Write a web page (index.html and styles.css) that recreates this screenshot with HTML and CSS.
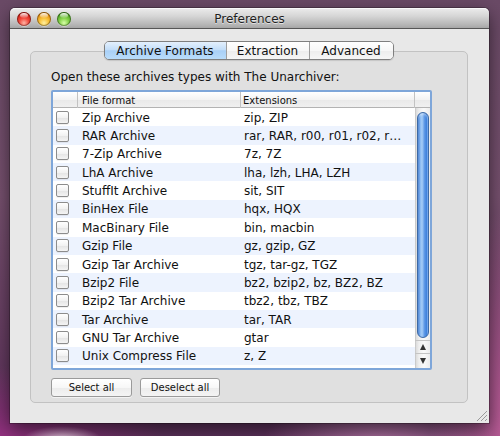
FILE: index.html
```html
<!DOCTYPE html>
<html>
<head>
<meta charset="utf-8">
<title>Preferences</title>
<link rel="stylesheet" href="styles.css">
</head>
<body>
<div class="window">
  <div class="titlebar">
    <div class="lights">
      <span class="light red"></span>
      <span class="light orange"></span>
      <span class="light green"></span>
    </div>
    <div class="title">Preferences</div>
    <div></div>
  </div>
  <div class="content">
    <div class="tabs">
      <div class="seg seg-a selected">Archive Formats</div>
      <div class="seg seg-b">Extraction</div>
      <div class="seg seg-c">Advanced</div>
    </div>
    <div class="box">
      <div class="label">Open these archives types with The Unarchiver:</div>
      <div class="table">
        <div class="thead">
          <div class="th"></div>
          <div class="th th-file">File format</div>
          <div class="th th-ext">Extensions</div>
          <div class="th th-corner"></div>
        </div>
        <div class="tbody">
          <div class="rows">
            <div class="row"><span class="cb"></span><span class="c-file">Zip Archive</span><span class="c-ext">zip, ZIP</span></div>
            <div class="row"><span class="cb"></span><span class="c-file">RAR Archive</span><span class="c-ext">rar, RAR, r00, r01, r02, r…</span></div>
            <div class="row"><span class="cb"></span><span class="c-file">7-Zip Archive</span><span class="c-ext">7z, 7Z</span></div>
            <div class="row"><span class="cb"></span><span class="c-file">LhA Archive</span><span class="c-ext">lha, lzh, LHA, LZH</span></div>
            <div class="row"><span class="cb"></span><span class="c-file">StuffIt Archive</span><span class="c-ext">sit, SIT</span></div>
            <div class="row"><span class="cb"></span><span class="c-file">BinHex File</span><span class="c-ext">hqx, HQX</span></div>
            <div class="row"><span class="cb"></span><span class="c-file">MacBinary File</span><span class="c-ext">bin, macbin</span></div>
            <div class="row"><span class="cb"></span><span class="c-file">Gzip File</span><span class="c-ext">gz, gzip, GZ</span></div>
            <div class="row"><span class="cb"></span><span class="c-file">Gzip Tar Archive</span><span class="c-ext">tgz, tar-gz, TGZ</span></div>
            <div class="row"><span class="cb"></span><span class="c-file">Bzip2 File</span><span class="c-ext">bz2, bzip2, bz, BZ2, BZ</span></div>
            <div class="row"><span class="cb"></span><span class="c-file">Bzip2 Tar Archive</span><span class="c-ext">tbz2, tbz, TBZ</span></div>
            <div class="row"><span class="cb"></span><span class="c-file">Tar Archive</span><span class="c-ext">tar, TAR</span></div>
            <div class="row"><span class="cb"></span><span class="c-file">GNU Tar Archive</span><span class="c-ext">gtar</span></div>
            <div class="row"><span class="cb"></span><span class="c-file">Unix Compress File</span><span class="c-ext">z, Z</span></div>
            <div class="row"><span class="cb"></span><span class="c-file"></span><span class="c-ext"></span></div>
          </div>
          <div class="scroller">
            <div class="track"><div class="knob"></div></div>
            <div class="arrow up"><span class="tri tri-up"></span></div>
            <div class="arrow down"><span class="tri tri-down"></span></div>
          </div>
        </div>
      </div>
      <div class="buttons">
        <button class="btn btn-select">Select all</button>
        <button class="btn btn-deselect">Deselect all</button>
      </div>
    </div>
  </div>
  <svg class="grip" width="11" height="11" viewBox="0 0 11 11">
    <line x1="1" y1="11" x2="11" y2="1" stroke="#9a9a9a" stroke-width="1"/>
    <line x1="5" y1="11" x2="11" y2="5" stroke="#9a9a9a" stroke-width="1"/>
    <line x1="9" y1="11" x2="11" y2="9" stroke="#9a9a9a" stroke-width="1"/>
  </svg>
</div>
</body>
</html>
```

FILE: styles.css
```css
* { box-sizing: border-box; }

html, body {
  margin: 0;
  width: 500px;
  height: 436px;
  overflow: hidden;
}

body {
  padding: 8px 0 0 10px;
  font-family: "DejaVu Sans", "Liberation Sans", sans-serif;
  color: #111;
  background:
    radial-gradient(ellipse 40px 14px at 62px 440px, rgba(255,240,250,0.85), rgba(255,240,250,0) 100%),
    radial-gradient(ellipse 120px 60px at 380px 450px, rgba(220,150,200,0.7), rgba(220,150,200,0) 100%),
    radial-gradient(ellipse 80px 220px at 510px 430px, #c2609c, rgba(194,96,156,0) 100%),
    radial-gradient(ellipse 160px 70px at 0px 436px, #92307f, rgba(146,48,127,0) 100%),
    linear-gradient(to bottom, #6a4a66 0%, #76506e 45%, #5a2f58 100%);
}

.window {
  position: relative;
  width: 479px;
  height: 415px;
  display: flex;
  flex-direction: column;
  border-radius: 5px 5px 0 0;
  box-shadow: 0 6px 18px rgba(0,0,0,0.55), 0 0 0 1px rgba(0,0,0,0.25);
}

.titlebar {
  height: 21px;
  display: grid;
  grid-template-columns: 1fr auto 1fr;
  align-items: center;
  border-radius: 5px 5px 0 0;
  background: linear-gradient(to bottom, #ececec 0%, #d6d6d6 40%, #b4b4b4 85%, #a6a6a6 100%);
  border-bottom: 1px solid #565656;
  box-shadow: inset 0 1px 0 rgba(255,255,255,0.7);
}

.lights {
  display: flex;
  gap: 6px;
  padding-left: 7px;
  padding-top: 1px;
}

.light {
  position: relative;
  width: 14px;
  height: 14px;
  border-radius: 50%;
  box-shadow: inset 0 0 0 1px rgba(0,0,0,0.35), 0 1px 0 rgba(255,255,255,0.4);
}
.light::after {
  content: "";
  position: absolute;
  top: 1px;
  left: 3px;
  width: 8px;
  height: 5px;
  border-radius: 50%;
  background: linear-gradient(to bottom, rgba(255,255,255,0.95), rgba(255,255,255,0.1));
}
.red    { background: radial-gradient(circle at 50% 78%, #ffb4a4 0, #f2483c 38%, #cc1e16 70%, #8e0f0b 100%); }
.orange { background: radial-gradient(circle at 50% 78%, #fff0a0 0, #f8c036 38%, #e08a0e 70%, #9e5a06 100%); }
.green  { background: radial-gradient(circle at 50% 78%, #d8ffa8 0, #84d24a 38%, #4ca222 70%, #2c6a10 100%); }

.title {
  font-size: 12px;
  line-height: 20px;
  padding-top: 1px;
  color: #1e1e1e;
  text-shadow: 0 1px 0 rgba(255,255,255,0.6);
}

.content {
  flex: 1;
  padding: 12px 21px 20px 20px;
  background: #e8e8e8;
  display: flex;
  flex-direction: column;
}

.tabs {
  position: relative;
  z-index: 1;
  align-self: center;
  display: flex;
  height: 19px;
  border: 1px solid #7f7f7f;
  border-radius: 5px;
  overflow: hidden;
  box-shadow: 0 1px 1px rgba(0,0,0,0.12);
  margin-left: -1px;
}

.seg {
  font-size: 12px;
  line-height: 17px;
  padding-top: 1px;
  text-align: center;
  background: linear-gradient(to bottom, #ffffff 0%, #f7f7f7 50%, #ededed 51%, #f6f6f6 100%);
  color: #111;
}
.seg + .seg { border-left: 1px solid #9e9e9e; }
.seg-a { width: 121px; }
.seg-b { width: 83px; }
.seg-c { width: 84px; }
.seg.selected {
  background: linear-gradient(to bottom, #e4f0fd 0%, #c3def9 45%, #a9d0f7 52%, #b9dcfb 100%);
}

.box {
  margin-top: -9px;
  height: 352px;
  border: 1px solid #c2c2c2;
  border-radius: 5px;
  background: #e0e0e0;
  padding: 17px 0 5px 20px;
  display: flex;
  flex-direction: column;
}

.label {
  font-size: 12px;
  line-height: 15px;
  padding-top: 1px;
  height: 15px;
}

.table {
  margin-top: 6px;
  width: 381px;
  height: 280px;
  border: 2px solid #7ea6d9;
  border-radius: 2px;
  background: #fff;
  display: flex;
  flex-direction: column;
  overflow: hidden;
}

.thead {
  display: grid;
  grid-template-columns: 25px 163px 174px 15px;
  height: 16px;
  border-bottom: 1px solid #b3b3b3;
  background: linear-gradient(to bottom, #ffffff 0%, #f3f3f3 50%, #e9e9e9 51%, #f0f0f0 100%);
}
.th {
  font-size: 10px;
  line-height: 15px;
  padding-top: 1px;
  border-right: 1px solid #c2c2c2;
  white-space: nowrap;
}
.th-file { padding-left: 4px; }
.th-ext { padding-left: 2px; }
.th-corner { border-right: none; }

.tbody {
  flex: 1;
  display: flex;
  min-height: 0;
}

.rows {
  width: 362px;
  overflow: hidden;
}

.row {
  display: grid;
  grid-template-columns: 25px 163px 174px;
  align-items: center;
  height: 18.36px;
  font-size: 12px;
  white-space: nowrap;
}
.row:nth-child(even) { background: #edf3fe; }

.cb {
  width: 13px;
  height: 13px;
  margin-left: 3px;
  border: 1px solid #8c8c8c;
  border-radius: 2px;
  background: linear-gradient(to bottom, #ffffff 0%, #f2f2f2 50%, #e4e4e4 51%, #f4f4f4 100%);
  box-shadow: 0 1px 0 rgba(0,0,0,0.06);
}
.c-file { padding: 1px 0 0 4px; }
.c-ext { padding: 1px 0 0 3px; overflow: hidden; }

.scroller {
  width: 15px;
  display: flex;
  flex-direction: column;
  background: linear-gradient(to right, #b9b9b9 0, #dcdcdc 1px, #efefef 4px, #fafafa 9px, #ececec 100%);
}

.track {
  flex: 1;
  padding: 4px 1px 2px 2px;
  display: flex;
  flex-direction: column;
}

.knob {
  flex: 1;
  border-radius: 6px;
  border: 1px solid #3d6aa6;
  background: linear-gradient(to right, #3f7ad0 0%, #8dbcf2 25%, #a6cdf7 40%, #5d98e6 65%, #3f82dc 85%, #74aaf0 100%);
  box-shadow: inset 0 2px 2px rgba(255,255,255,0.35);
}

.arrow {
  display: flex;
  align-items: center;
  justify-content: center;
  border-top: 1px solid #c4c4c4;
}
.arrow.up { height: 13px; }
.arrow.down { height: 15px; }

.tri {
  width: 0;
  height: 0;
  border-left: 3.5px solid transparent;
  border-right: 3.5px solid transparent;
}
.tri-up { border-bottom: 6px solid #333; }
.tri-down { border-top: 6px solid #333; }

.buttons {
  margin-top: 8px;
  display: flex;
  gap: 8px;
}

.btn {
  height: 19px;
  padding: 1px 0 0;
  font-family: "DejaVu Sans", "Liberation Sans", sans-serif;
  font-size: 10px;
  line-height: 16px;
  color: #111;
  border: 1px solid #9a9a9a;
  border-radius: 3px;
  background: linear-gradient(to bottom, #ffffff 0%, #f7f7f7 50%, #ececec 51%, #f4f4f4 100%);
  box-shadow: 0 1px 0 rgba(255,255,255,0.6);
}
.btn-select { width: 81px; }
.btn-deselect { width: 80px; }

.grip {
  position: absolute;
  right: 2px;
  bottom: 2px;
}
```
